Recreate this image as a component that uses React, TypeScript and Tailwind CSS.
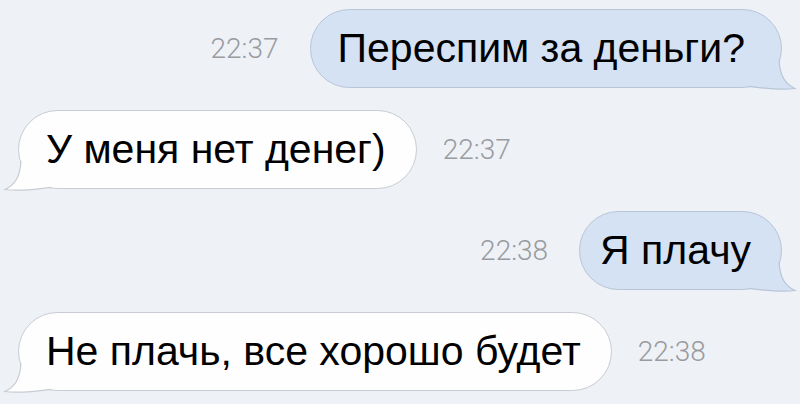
const TEXT_FONT = "font-['Liberation_Sans','Helvetica',sans-serif]";

function Tail({ side, fill, stroke }: { side: "left" | "right"; fill: string; stroke: string }) {
  const pos =
    side === "right"
      ? "absolute right-[-18px] bottom-[-5px]"
      : "absolute left-[-18px] bottom-[-5px] -scale-x-100";
  return (
    <svg className={pos} width="50" height="42" viewBox="0 0 50 42" fill="none">
      <path d="M30 10 C31 26 36 34 46 38.5 C36 40 20 39 0 36.3 L0 0 L25 0 Z" fill={fill} />
      <path d="M30 10 C31 26 36 34 46 38.5 C36 40 20 39 0 36.3" stroke={stroke} strokeWidth="1.2" />
    </svg>
  );
}

function Time({ value }: { value: string }) {
  return (
    <span className="font-['Roboto','Liberation_Sans',sans-serif] font-light text-[28px] leading-none text-[#999ba0]">
      {value}
    </span>
  );
}

function Outgoing({ text, time, tight }: { text: string; time: string; tight?: boolean }) {
  return (
    <div className="flex items-center justify-end gap-[31px] pr-[18px]">
      <Time value={time} />
      <div
        className={`relative flex h-[79px] items-center rounded-full border border-[#b7c5d7] bg-[#d5e2f4] ${
          tight ? "pl-[20px] pr-[30px]" : "pl-[27px] pr-[36px]"
        }`}
      >
        <span className={`${TEXT_FONT} relative z-10 text-[41px] leading-none text-black`}>{text}</span>
        <Tail side="right" fill="#d5e2f4" stroke="#b7c5d7" />
      </div>
    </div>
  );
}

function Incoming({ text, time }: { text: string; time: string }) {
  return (
    <div className="flex items-center justify-start gap-[26px] pl-[18px]">
      <div className="relative flex h-[79px] items-center rounded-full border border-[#c8ccd2] bg-[#fefefe] pl-[27px] pr-[30px]">
        <span className={`${TEXT_FONT} relative z-10 text-[41px] leading-none text-black`}>{text}</span>
        <Tail side="left" fill="#fefefe" stroke="#c8ccd2" />
      </div>
      <Time value={time} />
    </div>
  );
}

export default function App() {
  return (
    <main className="flex h-[404px] w-[800px] flex-col gap-[22px] overflow-hidden bg-[#eef1f6] pt-[9px]">
      <Outgoing text="Переспим за деньги?" time="22:37" />
      <Incoming text="У меня нет денег)" time="22:37" />
      <Outgoing text="Я плачу" time="22:38" tight />
      <Incoming text="Не плачь, все хорошо будет" time="22:38" />
    </main>
  );
}
